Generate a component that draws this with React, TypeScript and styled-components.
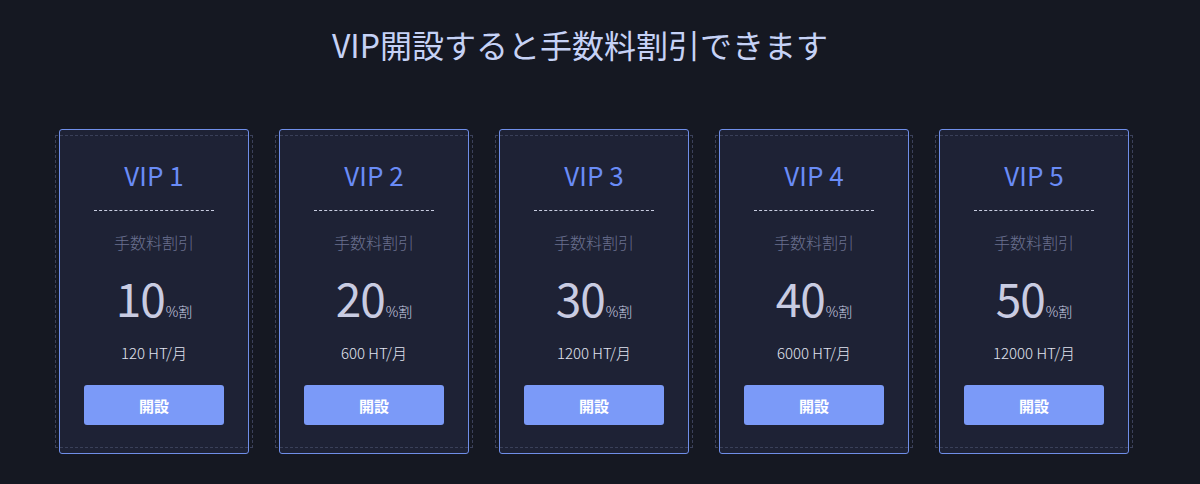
import React, { FunctionComponent } from 'react'
import styled, { createGlobalStyle } from 'styled-components'

const GlobalStyle = createGlobalStyle`
  html, body {
    margin: 0;
    padding: 0;
    background: #151822;
  }
  body {
    font-family: 'Noto Sans CJK JP', 'Noto Sans', sans-serif;
  }
`

const Page = styled.div`
  width: 1200px;
  height: 484px;
  box-sizing: border-box;
  padding: 24px 0 0;
  background: #151822;
`
const Heading = styled.h1`
  margin: 0;
  padding-right: 40px;
  font-size: 32px;
  line-height: 40px;
  font-weight: 400;
  color: #c6d2f6;
  text-align: center;
`
const CardRow = styled.div`
  display: flex;
  gap: 30px;
  padding: 65px 0 0 59px;
`
const Card = styled.div`
  position: relative;
  width: 190px;
  height: 325px;
  box-sizing: border-box;
  border: 1px solid #6f8ee8;
  border-radius: 3px;
  background: #1e2235;
  display: flex;
  flex-direction: column;
  align-items: center;
  padding-top: 27px;

  &::before {
    content: '';
    position: absolute;
    top: 5px;
    bottom: 5px;
    left: -5px;
    right: -5px;
    border: 1px dashed #3a4059;
    pointer-events: none;
  }
`
const Level = styled.div`
  font-size: 26px;
  line-height: 36px;
  color: #6a8cf6;
`
const Divider = styled.div`
  width: 120px;
  margin-top: 17px;
  border-top: 1px dashed #c9cde0;
`
const Label = styled.div`
  margin-top: 21px;
  font-size: 16px;
  line-height: 20px;
  font-weight: 300;
  color: #6b7190;
`
const Rate = styled.div`
  margin-top: 20px;
  display: flex;
  align-items: baseline;
  color: #c9cce2;
`
const Number = styled.span`
  font-size: 46px;
  line-height: 50px;
  font-weight: 400;
  letter-spacing: -1px;
`
const Unit = styled.span`
  font-size: 14px;
  font-weight: 300;
  margin-left: 1px;
`
const Price = styled.div`
  margin-top: 21px;
  font-size: 15px;
  line-height: 20px;
  font-weight: 300;
  color: #e1e4f0;
`
const OpenButton = styled.button`
  margin-top: 22px;
  width: 140px;
  height: 40px;
  border: none;
  border-radius: 3px;
  background: #7b9af8;
  color: #ffffff;
  font-family: 'Noto Sans CJK JP', sans-serif;
  font-size: 15px;
  font-weight: 700;
  cursor: pointer;
`

interface Plan {
  level: number
  rate: number
  price: number
}

const plans: Plan[] = [
  { level: 1, rate: 10, price: 120 },
  { level: 2, rate: 20, price: 600 },
  { level: 3, rate: 30, price: 1200 },
  { level: 4, rate: 40, price: 6000 },
  { level: 5, rate: 50, price: 12000 },
]

const App: FunctionComponent = () => {
  return (
    <Page>
      <GlobalStyle />
      <Heading>VIP開設すると手数料割引できます</Heading>
      <CardRow>
        {plans.map((p) => (
          <Card key={p.level}>
            <Level>VIP {p.level}</Level>
            <Divider />
            <Label>手数料割引</Label>
            <Rate>
              <Number>{p.rate}</Number>
              <Unit>%割</Unit>
            </Rate>
            <Price>{p.price} HT/月</Price>
            <OpenButton>開設</OpenButton>
          </Card>
        ))}
      </CardRow>
    </Page>
  )
}

export default App
